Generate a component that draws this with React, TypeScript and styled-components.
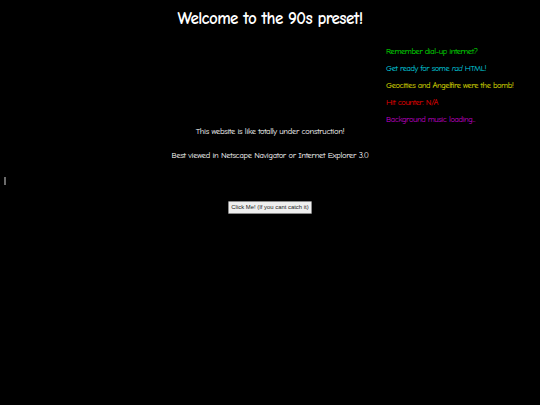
import React from "react";
import styled, { createGlobalStyle } from "styled-components";

const Global = createGlobalStyle`
  html, body { margin: 0; padding: 0; background: #000; }
  body { font-family: "Comic Sans MS", "Comic Neue", cursive; color: #fff; }
`;

const Page = styled.div`
  width: 540px;
  height: 405px;
  background: #000;
  display: flex;
  flex-direction: column;
  overflow: hidden;
`;

const Title = styled.h1`
  margin: 6px 0 0;
  text-align: center;
  font-size: 17px;
  letter-spacing: -0.6px;
  font-weight: bold;
  line-height: 26px;
  color: #fff;
`;

const Side = styled.div`
  display: grid;
  grid-template-columns: 1fr 154px;
  margin-top: 13px;
`;

const List = styled.ul`
  grid-column: 2;
  list-style: none;
  margin: 0;
  padding: 0;
  display: flex;
  flex-direction: column;
  gap: 5px;
`;

const Item = styled.li<{ $color: string }>`
  color: ${(p) => p.$color};
  font-size: 8.5px;
  letter-spacing: -0.42px;
  line-height: 12px;
  white-space: nowrap;
`;

const Center = styled.div`
  display: flex;
  flex-direction: column;
  align-items: center;
  margin-top: 0;
  gap: 12px;
`;

const Line = styled.p`
  margin: 0;
  font-size: 8.5px;
  letter-spacing: -0.3px;
  line-height: 12px;
  color: #fff;
`;

const Tick = styled.div`
  width: 2px;
  height: 8px;
  background: #6a6a6a;
  margin: 16px 0 0 4px;
`;

const ButtonRow = styled.div`
  display: flex;
  justify-content: center;
  margin-top: 16px;
`;

const Button = styled.button`
  font-family: "Liberation Sans", Arial, sans-serif;
  font-size: 5.9px;
  height: 13px;
  padding: 0 2px;
  background: #efefef;
  color: #222;
  border: 1px solid #8a8a8a;
  border-radius: 1px;
  line-height: 11px;
`;

export default function App() {
  return (
    <Page>
      <Global />
      <Title>Welcome to the 90s preset!</Title>
      <Side>
        <List>
          <Item $color="#00e000">Remember dial-up internet?</Item>
          <Item $color="#00d8e0">
            Get ready for some <i>rad</i> HTML!
          </Item>
          <Item $color="#e0e000">Geocities and Angelfire were the bomb!</Item>
          <Item $color="#f00000">Hit counter: N/A</Item>
          <Item $color="#c000c8">Background music loading...</Item>
        </List>
      </Side>
      <Center>
        <Line>This website is like totally under construction!</Line>
        <Line>Best viewed in Netscape Navigator or Internet Explorer 3.0</Line>
      </Center>
      <Tick />
      <ButtonRow>
        <Button>Click Me! (If you cant catch it)</Button>
      </ButtonRow>
    </Page>
  );
}
